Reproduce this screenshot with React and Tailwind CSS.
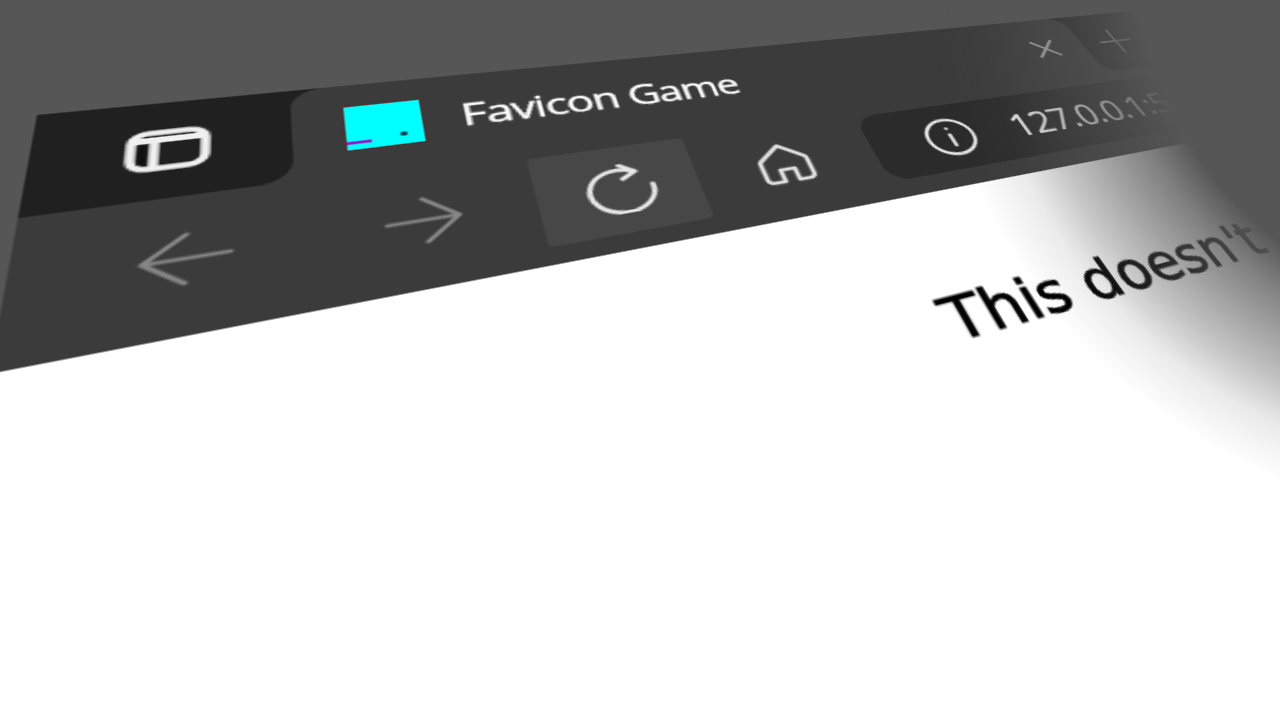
// flat browser chrome at 2x, tilted as one plane with a single matrix3d
function VerticalTabsIcon() {
  return (
    <svg width="30" height="28" viewBox="0 0 30 28" fill="none" stroke="#f0f0f0" strokeWidth="3.5">
      <rect x="2" y="2" width="26" height="24" rx="6" />
      <path d="M2 7H28" strokeWidth="4" />
      <path d="M10 8V26" />
      <path d="M6 10V23" stroke="#111" strokeWidth="3" />
    </svg>
  );
}

function Arrow({ flip }) {
  return (
    <svg width="33" height="33" viewBox="0 0 36 36" fill="none" stroke="#868686" strokeWidth="2.4" strokeLinecap="round" strokeLinejoin="round" className={flip ? "-scale-x-100" : ""}>
      <path d="M34 18H3M18 3L3 18L18 33" />
    </svg>
  );
}

function ReloadIcon() {
  return (
    <svg width="35" height="35" viewBox="0 0 36 36" fill="none" stroke="#e6e6e6" strokeWidth="2.6" strokeLinecap="round" strokeLinejoin="round">
      <path d="M26 6.5A15.5 15.5 0 1 0 33.5 18" />
      <path d="M20 1L27 7L20 11.5" />
    </svg>
  );
}

function HomeIcon() {
  return (
    <svg width="30" height="32" viewBox="0 0 30 32" fill="none" stroke="#dedede" strokeWidth="2.6" strokeLinejoin="round">
      <path d="M15 2L3 12.5A3 3 0 0 0 2 15V27A3 3 0 0 0 5 30H11V21H19V30H25A3 3 0 0 0 28 27V15A3 3 0 0 0 27 12.5Z" />
    </svg>
  );
}

function InfoIcon() {
  return (
    <svg width="33" height="33" viewBox="0 0 34 34" fill="none" stroke="#e8e8e8" strokeWidth="2.4" strokeLinecap="round">
      <circle cx="17" cy="17" r="15.5" />
      <path d="M17 15V25" />
      <circle cx="17" cy="9.5" r="1.2" fill="#e8e8e8" stroke="none" />
    </svg>
  );
}

function Favicon() {
  return (
    <div className="relative w-8 h-8 shrink-0 bg-[#00ffff] outline outline-1 outline-[#5a2a2a]">
      <div className="absolute left-0 top-[26px] w-[10px] h-[2px] bg-[#a010d0]" />
      <div className="absolute left-[22px] top-[23px] w-[3px] h-[3px] rounded-full bg-[#123]" />
    </div>
  );
}

export default function App() {
  const btn = "w-[76px] h-[61px] flex items-center justify-center rounded-[3px]";

  return (
    <div className="relative h-screen overflow-hidden bg-[#565656]">
      <div className="w-[1108px] h-[576px] flex flex-col origin-top-left blur-[0.5px] [transform:matrix3d(3.12671,-0.15395,0,0.00120776,-0.31847,1.2925,0,-0.00135319,0,0,1,0,37,115,0,1)]">
        {/* tab strip */}
        <div className="h-[65px] shrink-0 flex bg-[#3b3b3b]">
          <div className="w-[91px] flex items-center justify-center bg-[#202020] rounded-br-[14px]">
            <VerticalTabsIcon />
          </div>
          <div className="w-[463px] bg-[#202020]">
            <div className="h-full flex items-center bg-[#3b3b3b] rounded-t-[14px] px-[21px]">
              <Favicon />
              <span className="ml-[17px] text-[23px] text-white font-medium font-['Open_Sans',sans-serif] whitespace-nowrap tracking-[-0.7px] [-webkit-text-stroke:0.3px_white]">Favicon Game</span>
              <svg width="22" height="22" viewBox="0 0 20 20" stroke="#c4c4c4" strokeWidth="2" className="ml-auto">
                <path d="M2 2L18 18M18 2L2 18" />
              </svg>
            </div>
          </div>
          <div className="flex-1 flex items-center bg-[#202020] rounded-bl-[14px] pl-[15px]">
            <svg width="30" height="30" viewBox="0 0 30 30" stroke="#bdbdbd" strokeWidth="1.8">
              <path d="M15 1V29M1 15H29" />
            </svg>
          </div>
        </div>

        {/* toolbar */}
        <div className="h-[79px] shrink-0 flex gap-[9px] pl-[15px] pt-[7px] bg-[#3b3b3b]">
          <div className={btn}><Arrow /></div>
          <div className={btn}><Arrow flip /></div>
          <div className={`${btn} bg-[#474747]`}><ReloadIcon /></div>
          <div className={btn}><HomeIcon /></div>
          <div className="flex-1 ml-[5px] h-[56px] mt-[3px] flex items-center pl-[35px] bg-[#2b2b2b] rounded-[14px]">
            <InfoIcon />
            <span className="ml-[27px] text-[27px] text-white font-['Open_Sans',sans-serif] tracking-[-0.8px] [-webkit-text-stroke:0.2px_white]">127.0.0.1:5500</span>
          </div>
        </div>

        {/* page */}
        <div className="flex-1 bg-white pl-[347px] pt-[62px]">
          <p className="text-[36px] leading-[46px] text-black font-['DejaVu_Sans',sans-serif] tracking-[-0.2px] whitespace-nowrap [-webkit-text-stroke:0.8px_black]">This doesn't</p>
        </div>
      </div>

      {/* soft fade over the far corner */}
      <div className="absolute inset-0 pointer-events-none bg-[radial-gradient(circle_at_1500px_-50px,#565656_365px,rgba(86,86,86,0.75)_405px,rgba(86,86,86,0.6)_435px,rgba(86,86,86,0.35)_485px,rgba(86,86,86,0.12)_525px,transparent_575px)]" />
    </div>
  );
}
